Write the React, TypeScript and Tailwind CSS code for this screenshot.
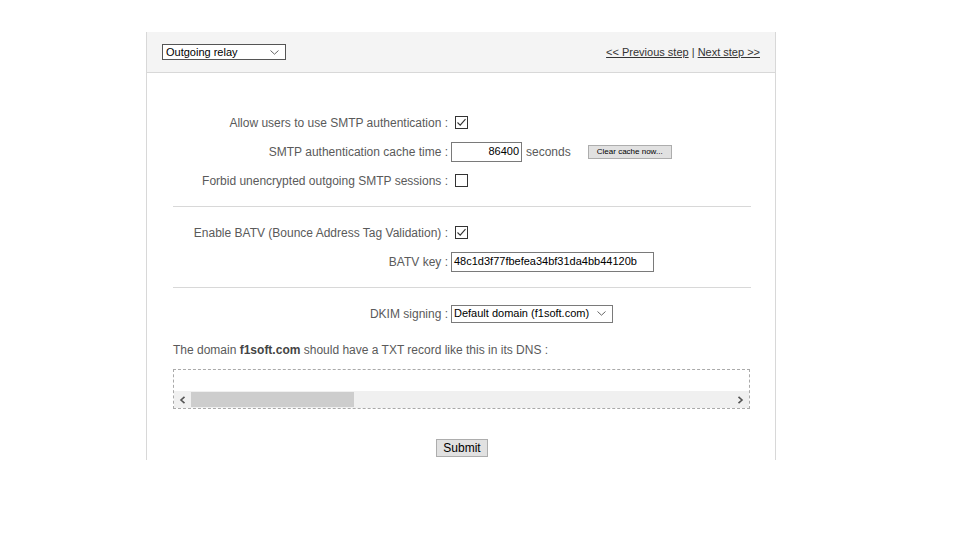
import React from "react";

const font = { fontFamily: '"Liberation Sans", Arial, sans-serif' };

function Check({ checked }: { checked?: boolean }) {
  return (
    <div className="ml-[4px] flex h-[13px] w-[13px] items-center justify-center border border-[#333] bg-white">
      {checked && (
        <svg width="11" height="11" viewBox="0 0 11 11">
          <path d="M1.5 5.5 L4.2 8.2 L9.5 2.2" fill="none" stroke="#333" strokeWidth="1.1" />
        </svg>
      )}
    </div>
  );
}

function Chevron() {
  return (
    <svg width="9" height="5" viewBox="0 0 9 5" className="shrink-0">
      <path d="M0.5 0.5 L4.5 4.2 L8.5 0.5" fill="none" stroke="#666" strokeWidth="1" />
    </svg>
  );
}

function Row({ label, children }: { label: string; children: React.ReactNode }) {
  return (
    <div className="flex h-[29px] items-center">
      <div className="w-[278px] whitespace-nowrap pr-[3px] text-right text-[12px] text-[#5a5a5a]">{label} :</div>
      <div className="flex items-center">{children}</div>
    </div>
  );
}

export default function App() {
  return (
    <div className="min-h-[540px] bg-white pt-[32px]" style={font}>
      <div className="ml-[146px] w-[630px] border-x border-[#d8d8d8]">
        <div className="flex h-[41px] items-center justify-between border-b border-[#d8d8d8] bg-[#f4f4f4] pl-[15px] pr-[15px]">
          <div className="flex h-[16px] w-[124px] items-center justify-between whitespace-nowrap border border-[#555] bg-white pl-[3px] pr-[6px] text-[11px] text-black">
            <span>Outgoing relay</span>
            <Chevron />
          </div>
          <div className="whitespace-nowrap text-[11px] text-[#333]">
            <span className="underline">&lt;&lt; Previous step</span> | <span className="underline">Next step &gt;&gt;</span>
          </div>
        </div>

        <div className="pb-[3px] pl-[26px] pr-[24px] pt-[35px]">
          <Row label="Allow users to use SMTP authentication">
            <Check checked />
          </Row>
          <Row label="SMTP authentication cache time">
            <div className="flex h-[20px] w-[71px] items-center justify-end border border-[#7a7a7a] bg-white pr-[2px] text-[11px] text-black">
              86400
            </div>
            <span className="ml-[4px] text-[12px] text-[#5a5a5a]">seconds</span>
            <div className="ml-[17px] flex h-[14px] w-[84px] items-center justify-center whitespace-nowrap border border-[#adadad] bg-[#e1e1e1] text-[8px] text-black">
              Clear cache now...
            </div>
          </Row>
          <Row label="Forbid unencrypted outgoing SMTP sessions">
            <Check />
          </Row>

          <div className="my-[11px] h-px bg-[#d8d8d8]" />

          <Row label="Enable BATV (Bounce Address Tag Validation)">
            <Check checked />
          </Row>
          <Row label="BATV key">
            <div className="flex h-[20px] w-[203px] items-center whitespace-nowrap border border-[#7a7a7a] bg-white pl-[2px] text-[11px] text-black">
              48c1d3f77fbefea34bf31da4bb44120b
            </div>
          </Row>

          <div className="my-[11px] h-px bg-[#d8d8d8]" />

          <Row label="DKIM signing">
            <div className="flex h-[18px] w-[162px] items-center justify-between whitespace-nowrap border border-[#7a7a7a] bg-white pl-[2px] pr-[6px] text-[11px] text-black">
              <span>Default domain (f1soft.com)</span>
              <Chevron />
            </div>
          </Row>

          <p className="mt-[15px] text-[12px] leading-[14px] text-[#5a5a5a]">
            The domain <b className="text-[#444]">f1soft.com</b> should have a TXT record like this in its DNS :
          </p>

          <div className="mt-[12px] w-[577px] border border-dashed border-[#aaa]">
            <div className="h-[21px] bg-white" />
            <div className="flex h-[17px] items-center bg-[#f0f0f0]">
              <div className="flex w-[17px] items-center justify-center">
                <svg width="7" height="8" viewBox="0 0 7 8">
                  <path d="M5.5 0.8 L2 4 L5.5 7.2" fill="none" stroke="#555" strokeWidth="1.6" />
                </svg>
              </div>
              <div className="flex h-full flex-1 items-center">
                <div className="h-[15px] w-[163px] bg-[#cdcdcd]" />
              </div>
              <div className="flex w-[17px] items-center justify-center">
                <svg width="7" height="8" viewBox="0 0 7 8">
                  <path d="M1.5 0.8 L5 4 L1.5 7.2" fill="none" stroke="#555" strokeWidth="1.6" />
                </svg>
              </div>
            </div>
          </div>

          <div className="mt-[30px] flex justify-center">
            <div className="flex h-[18px] w-[52px] items-center justify-center border border-[#adadad] bg-[#e1e1e1] text-[12px] text-black">
              Submit
            </div>
          </div>
        </div>
      </div>
    </div>
  );
}
